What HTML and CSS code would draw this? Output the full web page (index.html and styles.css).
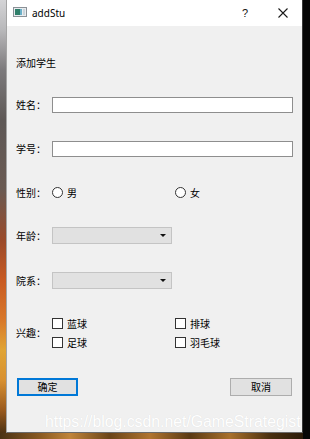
FILE: index.html
```html
<!DOCTYPE html>
<html lang="zh-CN">
<head>
<meta charset="utf-8">
<title>addStu</title>
<link rel="stylesheet" href="styles.css">
</head>
<body>
<div class="desktop">
  <div class="window">
    <div class="titlebar">
      <svg class="app-icon" width="14" height="10" viewBox="0 0 14 10">
        <rect x="0.5" y="0.5" width="13" height="9" fill="#e8ecef" stroke="#8a9096"/>
        <rect x="2" y="2" width="5" height="6" fill="#2f7f6a"/>
        <rect x="7" y="2" width="2" height="6" fill="#6bb0c8"/>
        <rect x="10" y="2" width="2" height="6" fill="#c9d3d9"/>
      </svg>
      <span class="title">addStu</span>
      <span class="spacer"></span>
      <span class="help">?</span>
      <svg class="close" width="10" height="10" viewBox="0 0 10 10">
        <path d="M0.5 0.5 L9.5 9.5 M9.5 0.5 L0.5 9.5" stroke="#1a1a1a" stroke-width="1.1" fill="none"/>
      </svg>
    </div>
    <div class="content">
      <div class="heading">添加学生</div>

      <div class="row row-name">
        <span class="label">姓名：</span>
        <div class="lineedit"></div>
      </div>

      <div class="row row-id">
        <span class="label">学号：</span>
        <div class="lineedit"></div>
      </div>

      <div class="row row-sex">
        <span class="label">性别：</span>
        <div class="choices">
          <span class="choice"><span class="radio"></span>男</span>
          <span class="choice"><span class="radio"></span>女</span>
        </div>
      </div>

      <div class="row row-age">
        <span class="label">年龄：</span>
        <div class="combo"><span class="arrow"></span></div>
      </div>

      <div class="row row-dept">
        <span class="label">院系：</span>
        <div class="combo"><span class="arrow"></span></div>
      </div>

      <div class="row row-hobby">
        <span class="label">兴趣：</span>
        <div class="hobbies">
          <span class="choice"><span class="check"></span>蓝球</span>
          <span class="choice"><span class="check"></span>排球</span>
          <span class="choice"><span class="check"></span>足球</span>
          <span class="choice"><span class="check"></span>羽毛球</span>
        </div>
      </div>

      <div class="buttons">
        <div class="btn btn-default">确定</div>
        <div class="btn">取消</div>
      </div>
    </div>
    <div class="watermark">https://blog.csdn.net/GameStrategist</div>
  </div>
</div>
</body>
</html>
```

FILE: styles.css
```css
html, body {
  margin: 0;
  padding: 0;
  width: 310px;
  height: 439px;
  overflow: hidden;
}

.desktop {
  width: 310px;
  height: 439px;
  box-sizing: border-box;
  padding-left: 6px;
  display: flex;
  align-items: flex-start;
  background:
    linear-gradient(to right, rgba(0,0,0,0) 303px, #060606 303px),
    linear-gradient(to right, #4a3214 0px, #8a5a22 40px, #c0843a 70px, #6a4418 110px, #b07430 150px, #5a3a14 190px, #a8702c 230px, #4a3010 270px, #2a1a08 303px) 0 433px / 310px 6px no-repeat,
    linear-gradient(to bottom, #d4d4d6 0px, #b8b8ba 30px, #7c7a7c 70px, #5e5856 120px, #6a5a52 190px, #9a4a2a 240px, #c85a22 280px, #d8782a 320px, #e0a434 350px, #d89030 380px, #9a5a1e 410px, #3a2810 439px);
  font-family: "Noto Sans CJK SC", "Noto Sans", sans-serif;
}

.window {
  position: relative;
  width: 297px;
  height: 433px;
  box-sizing: border-box;
  border-left: 1px solid #a4a4a4;
  border-right: 1px solid #3a3a3a;
  border-bottom: 1px solid #6a6a6a;
  background: #f0f0f0;
  display: flex;
  flex-direction: column;
}

.titlebar {
  height: 26px;
  flex: none;
  background: #ffffff;
  display: flex;
  align-items: center;
  padding: 0 14px 0 6px;
}

.app-icon {
  flex: none;
  margin-bottom: 3px;
}

.title {
  margin-left: 5px;
  font-family: "Noto Sans", "Liberation Sans", sans-serif;
  font-size: 10px;
  color: #000;
  margin-bottom: 1px;
}

.spacer {
  flex: 1;
}

.help {
  width: 10px;
  text-align: center;
  font-family: "Liberation Sans", sans-serif;
  font-size: 11px;
  color: #111;
  margin-bottom: 1px;
}

.close {
  margin-left: 28px;
  margin-bottom: 1px;
}

.content {
  display: flex;
  flex-direction: column;
  padding: 0 9px 0 9px;
  font-size: 10px;
  color: #000;
}

.heading {
  margin-top: 29px;
  height: 16px;
  line-height: 16px;
}

.row {
  display: flex;
  align-items: center;
}

.label {
  width: 36px;
  flex: none;
  line-height: 16px;
}

.row-name {
  margin-top: 26px;
  height: 16px;
}

.row-id {
  margin-top: 28px;
  height: 16px;
}

.row-sex {
  margin-top: 27px;
  height: 17px;
}

.row-age {
  margin-top: 26px;
  height: 17px;
}

.row-dept {
  margin-top: 28px;
  height: 17px;
}

.row-hobby {
  margin-top: 25px;
  height: 38px;
}

.lineedit {
  flex: 1;
  height: 16px;
  box-sizing: border-box;
  background: #ffffff;
  border: 1px solid #8e8e8e;
}

.choices {
  display: grid;
  grid-template-columns: 123px auto;
  align-items: center;
}

.hobbies {
  display: grid;
  grid-template-columns: 123px auto;
  grid-auto-rows: 19px;
  align-items: center;
}

.choice {
  display: flex;
  align-items: center;
  gap: 4px;
  line-height: 16px;
}

.radio {
  width: 11px;
  height: 11px;
  box-sizing: border-box;
  border: 1px solid #333333;
  border-radius: 50%;
  background: #ffffff;
  flex: none;
}

.check {
  width: 11px;
  height: 11px;
  box-sizing: border-box;
  border: 1px solid #333333;
  background: #ffffff;
  flex: none;
}

.combo {
  width: 120px;
  height: 17px;
  box-sizing: border-box;
  background: #e1e1e1;
  border: 1px solid #c4c4c4;
  display: flex;
  align-items: center;
  justify-content: flex-end;
  padding-right: 5px;
}

.arrow {
  width: 0;
  height: 0;
  border-left: 3px solid transparent;
  border-right: 3px solid transparent;
  border-top: 3px solid #111111;
}

.buttons {
  margin-top: 26px;
  display: flex;
  justify-content: space-between;
  padding: 0 1px 0 1px;
}

.btn {
  width: 62px;
  height: 18px;
  box-sizing: border-box;
  background: #e1e1e1;
  border: 1px solid #adadad;
  display: flex;
  align-items: center;
  justify-content: center;
  font-size: 10px;
  line-height: 16px;
}

.btn-default {
  width: 61px;
  border: 1px solid #0078d7;
  box-shadow: inset 0 0 0 1px #0078d7;
}

.watermark {
  position: absolute;
  left: 38px;
  top: 413px;
  font-family: "Liberation Sans", Arial, sans-serif;
  font-size: 15.8px;
  line-height: 18px;
  color: #ffffff;
  text-shadow: 0 0 1px rgba(0, 0, 0, 0.1);
  white-space: nowrap;
}
```
